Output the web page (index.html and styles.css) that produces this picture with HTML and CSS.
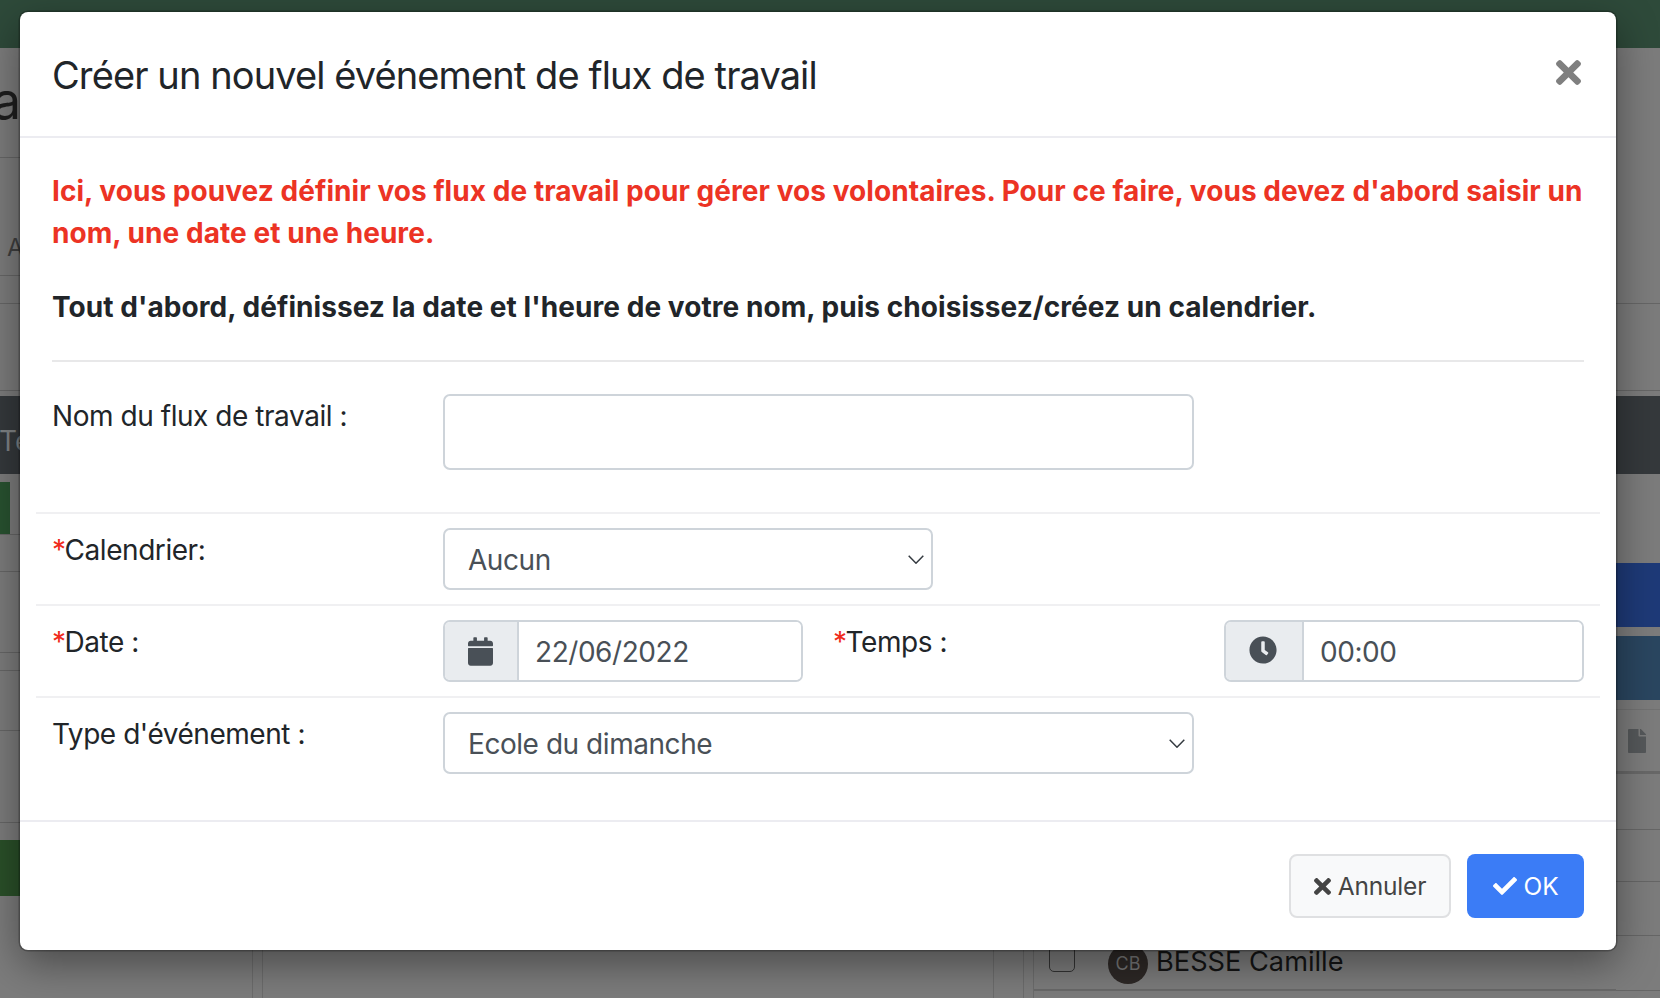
FILE: index.html
```html
<!DOCTYPE html>
<html lang="fr">
<head>
<meta charset="utf-8">
<title>Créer un nouvel événement de flux de travail</title>
<link rel="stylesheet" href="styles.css">
</head>
<body>
<div class="page">
  <div class="topbar"></div>
  <div class="content">
    <div class="strip strip-left">
      <div class="r line heading"><span>al</span></div>
      <div class="r line sublabel"><span>A</span></div>
      <div class="r line"></div>
      <div class="r line"></div>
      <div class="r"></div>
      <div class="r dark"><span>Te</span></div>
      <div class="r"></div>
      <div class="r line"><i class="green-tab"></i></div>
      <div class="r line"></div>
      <div class="r line"></div>
      <div class="r line"></div>
      <div class="r line"></div>
      <div class="r line"></div>
      <div class="r"></div>
      <div class="r green"></div>
      <div class="r"></div>
    </div>
    <div class="middle">
      <div class="panels">
        <div class="col col-a"></div>
        <div class="col col-b"></div>
        <div class="col col-c"></div>
        <div class="col col-d"></div>
        <div class="col col-e"></div>
        <div class="col col-f">
          <div class="person">
            <span class="check"></span>
            <span class="avatar">CB</span>
            <span class="name">BESSE Camille</span>
          </div>
        </div>
      </div>
    </div>
    <div class="strip strip-right">
      <div class="r line"></div>
      <div class="r line"></div>
      <div class="r"></div>
      <div class="r dark"></div>
      <div class="r"></div>
      <div class="r blue"></div>
      <div class="r"></div>
      <div class="r teal"></div>
      <div class="r line-faint"></div>
      <div class="r line-thick file-row">
        <svg class="file-icon" viewBox="0 0 384 512"><path d="M224 136V0H24C10.7 0 0 10.7 0 24v464c0 13.3 10.7 24 24 24h336c13.3 0 24-10.7 24-24V160H248c-13.2 0-24-10.8-24-24zm160-14.1v6.1H256V0h6.1c6.4 0 12.5 2.5 17 7l97.9 98c4.5 4.5 7 10.6 7 16.9z"/></svg>
      </div>
      <div class="r line"></div>
      <div class="r line"></div>
      <div class="r line"></div>
      <div class="r line"></div>
      <div class="r"></div>
    </div>
  </div>

  <div class="modal">
    <header class="modal-header">
      <h5 class="modal-title">Créer un nouvel événement de flux de travail</h5>
      <svg class="close-icon" viewBox="0 80 352 352"><path d="M242.72 256l100.07-100.07c12.28-12.28 12.28-32.19 0-44.48l-22.24-22.24c-12.28-12.28-32.19-12.28-44.48 0L176 189.28 75.93 89.21c-12.28-12.28-32.19-12.28-44.48 0L9.21 111.45c-12.28 12.28-12.28 32.19 0 44.48L109.28 256 9.21 356.07c-12.28 12.28-12.28 32.19 0 44.48l22.24 22.24c12.28 12.28 32.2 12.28 44.48 0L176 322.72l100.07 100.07c12.28 12.28 32.2 12.28 44.48 0l22.24-22.24c12.28-12.28 12.28-32.19 0-44.48L242.72 256z"/></svg>
    </header>
    <div class="modal-body">
      <p class="intro-red">Ici, vous pouvez définir vos flux de travail pour gérer vos volontaires. Pour ce faire, vous devez d'abord saisir un nom, une date et une heure.</p>
      <p class="intro-bold">Tout d'abord, définissez la date et l'heure de votre nom, puis choisissez/créez un calendrier.</p>
      <hr class="divider">
      <div class="form-row first">
        <label class="lbl">Nom du flux de travail :</label>
        <input class="field tall" type="text">
      </div>
      <div class="form-row">
        <label class="lbl"><span class="req">*</span>Calendrier:</label>
        <div class="select-wrap short">
          <select class="field"><option>Aucun</option></select>
          <svg class="chevron" viewBox="0 0 16 9"><path d="M.7.7 8 8.2 15.3.7"/></svg>
        </div>
      </div>
      <div class="form-row">
        <label class="lbl"><span class="req">*</span>Date :</label>
        <div class="group date-group">
          <span class="addon date-addon">
            <svg class="cal-icon" viewBox="0 0 448 512"><path d="M12 192h424c6.6 0 12 5.4 12 12v260c0 26.5-21.5 48-48 48H48c-26.5 0-48-21.5-48-48V204c0-6.6 5.4-12 12-12zm436-44v-36c0-26.5-21.5-48-48-48h-48V12c0-6.6-5.4-12-12-12h-40c-6.6 0-12 5.4-12 12v52H160V12c0-6.6-5.4-12-12-12h-40c-6.6 0-12 5.4-12 12v52H48C21.5 64 0 85.5 0 112v36c0 6.6 5.4 12 12 12h424c6.6 0 12-5.4 12-12z"/></svg>
          </span>
          <input class="group-input" type="text" value="22/06/2022">
        </div>
        <label class="lbl lbl-time"><span class="req">*</span>Temps :</label>
        <div class="group time-group">
          <span class="addon time-addon">
            <svg class="clock-icon" viewBox="0 0 512 512"><path d="M256,8C119,8,8,119,8,256S119,504,256,504,504,393,504,256,393,8,256,8Zm92.49,313h0l-20,25a16,16,0,0,1-22.49,2.5h0l-67-49.72a40,40,0,0,1-15-31.23V112a16,16,0,0,1,16-16h32a16,16,0,0,1,16,16V256l58,42.5A16,16,0,0,1,348.49,321Z"/></svg>
          </span>
          <input class="group-input" type="text" value="00:00">
        </div>
      </div>
      <div class="form-row">
        <label class="lbl">Type d'événement :</label>
        <div class="select-wrap wide">
          <select class="field"><option>Ecole du dimanche</option></select>
          <svg class="chevron" viewBox="0 0 16 9"><path d="M.7.7 8 8.2 15.3.7"/></svg>
        </div>
      </div>
    </div>
    <footer class="modal-footer">
      <button class="btn btn-cancel" type="button">
        <svg class="btn-x" viewBox="0 80 352 352"><path d="M242.72 256l100.07-100.07c12.28-12.28 12.28-32.19 0-44.48l-22.24-22.24c-12.28-12.28-32.19-12.28-44.48 0L176 189.28 75.93 89.21c-12.28-12.28-32.19-12.28-44.48 0L9.21 111.45c-12.28 12.28-12.28 32.19 0 44.48L109.28 256 9.21 356.07c-12.28 12.28-12.28 32.19 0 44.48l22.24 22.24c12.28 12.28 32.2 12.28 44.48 0L176 322.72l100.07 100.07c12.28 12.28 32.2 12.28 44.48 0l22.24-22.24c12.28-12.28 12.28-32.19 0-44.48L242.72 256z"/></svg>
        Annuler
      </button>
      <button class="btn btn-ok" type="button">
        <svg class="btn-check" viewBox="0 64 512 384"><path d="M173.898 439.404l-166.4-166.4c-9.997-9.997-9.997-26.206 0-36.204l36.203-36.204c9.997-9.998 26.207-9.998 36.204 0L192 312.69 432.095 72.596c9.997-9.997 26.207-9.997 36.204 0l36.203 36.204c9.997 9.997 9.997 26.206 0 36.204l-294.4 294.401c-9.998 9.997-26.207 9.997-36.204-.001z"/></svg>
        OK
      </button>
    </footer>
  </div>
</div>
</body>
</html>
```
FILE: styles.css
```css
* { box-sizing: border-box; }
html, body { margin: 0; height: 100%; }
body { font-family: "Inter", "Liberation Sans", sans-serif; background: #7c7c7c; overflow: hidden; }

.page { position: relative; width: 1660px; height: 998px; overflow: hidden; background: #7c7c7c; display: flex; flex-direction: column; }
.topbar { height: 48px; background: #2e4a3a; flex: none; }
.content { flex: 1; display: flex; min-height: 0; }

.strip { flex: none; display: grid; overflow: hidden; }
.strip-left {
  width: 20px;
  grid-template-rows: 110px 118px 28px 87px 5px 78px 8px 53px 37px 81px 18px 60px 92px 17px 56px 1fr;
}
.strip-right {
  width: 44px;
  grid-template-rows: 256px 87px 5px 78px 89px 64px 9px 64px 10px 64px 56px 52px 54px 55px 1fr;
}
.r { min-width: 0; overflow: hidden; white-space: nowrap; }
.line { border-bottom: 1px solid #666; }
.line-faint { border-bottom: 1px solid #727272; }
.line-thick { border-bottom: 3px solid #686868; }
.dark { background: #35393c; color: #7f8385; font-size: 28px; line-height: 90px; }
.dark span { display: block; margin-left: -1px; }
.heading { font-size: 52px; line-height: 1; color: #1e1e1e; padding-top: 27px; }
.heading span { display: block; margin-left: -8px; }
.sublabel { display: flex; align-items: flex-end; color: #3f3f3f; font-size: 24px; line-height: 38px; padding-bottom: 8px; }
.sublabel span { display: block; margin-left: 7px; }
.green-tab { display: block; width: 10px; height: 52px; background: #285230; }
.green { background: #2a5029; }
.blue { background: #1e3a78; }
.teal { background: #2a4660; }
.file-row { display: flex; padding: 19px 0 0 12px; }
.file-icon { width: 18px; height: 24px; fill: #55585a; }

.middle { flex: 1; display: flex; flex-direction: column; justify-content: flex-end; min-width: 0; }
.panels { height: 62px; display: flex; }
.col { border-left: 1px solid #6c6c6c; }
.col-a { width: 232px; border-left: 0; }
.col-b { width: 10px; }
.col-c { width: 731px; }
.col-d { width: 30px; }
.col-e { width: 10px; }
.col-f { flex: 1; border-left: 1px solid #6c6c6c; min-width: 0; }
.person { height: 55px; border-bottom: 2px solid #696969; display: flex; align-items: center; padding-left: 15px; }
.check { width: 26px; height: 26px; border: 1.5px solid #333; border-radius: 5px; margin-top: -8px; flex: none; }
.avatar { width: 40px; height: 40px; border-radius: 50%; background: #2d2826; color: #767676; font-size: 18px; display: flex; align-items: center; justify-content: center; margin-left: 33px; flex: none; margin-top: 2px; }
.name { margin-left: 8px; font-size: 27.2px; color: #141414; margin-top: -2px; }

.modal { position: absolute; left: 20px; top: 12px; width: 1596px; height: 938px; background: #fff; border-radius: 8px; box-shadow: 0 0 0 1.5px rgba(0,0,0,.25), 0 13px 42px rgba(0,0,0,.42); display: flex; flex-direction: column; color: #212529; }
.modal-header { height: 126px; border-bottom: 2px solid #ececf1; padding: 0 35px 0 32px; display: flex; justify-content: space-between; flex: none; }
.modal-title { margin: 0; font-size: 38px; line-height: 44px; padding-top: 41px; font-weight: 400; letter-spacing: -.9px; }
.close-icon { width: 25px; height: 25px; fill: #7f7f7f; margin-top: 48px; flex: none; }

.modal-body { flex: 1; padding: 32px 32px 0; }
.intro-red { margin: 0; font-size: 28px; line-height: 42px; font-weight: 700; color: #ec3324; letter-spacing: .06px; }
.intro-bold { margin: 32px 0 0; font-size: 28px; line-height: 42px; font-weight: 700; letter-spacing: .06px; }
.divider { border: 0; height: 2px; background: #e8e8e9; margin: 32px 0 32px; }

.form-row { display: flex; align-items: flex-start; margin: 0 -16px; padding: 14px 16px; border-top: 2px solid #f0f0f2; }
.form-row.first { border-top: 0; padding: 0 16px 42px; }
.lbl { flex: none; width: 391px; font-size: 28px; line-height: 44px; letter-spacing: -.45px; }
.req { color: #f02a1c; margin-right: -1px; }
.lbl-time { width: 391px; margin-left: 30px; }
.field { display: block; width: 100%; height: 62px; border: 2px solid #ced4da; border-radius: 7px; background: #fff; font: inherit; font-size: 28px; letter-spacing: -.45px; color: #495057; padding: 2px 23px 0; appearance: none; outline: 0; }
.tall { width: 751px; height: 76px; flex: none; }
.select-wrap { position: relative; flex: none; }
.short { width: 490px; }
.wide { width: 751px; }
.chevron { position: absolute; right: 9px; top: 27px; width: 16px; height: 9px; fill: none; stroke: #343a40; stroke-width: 1.5; }

.group { display: flex; height: 62px; border: 2px solid #ced4da; border-radius: 7px; overflow: hidden; flex: none; }
.date-group { width: 360px; }
.time-group { width: 360px; }
.addon { background: #e9ecef; border-right: 2px solid #ced4da; display: flex; align-items: center; justify-content: center; flex: none; }
.date-addon { width: 74px; }
.time-addon { width: 78px; }
.cal-icon { width: 25px; height: 29px; fill: #495057; margin-left: -1px; }
.clock-icon { width: 28px; height: 28px; fill: #495057; margin: -3px 0 0 -2px; }
.group-input { flex: 1; min-width: 0; border: 0; outline: 0; font: inherit; font-size: 28px; letter-spacing: -.45px; color: #495057; padding: 2px 0 0 16px; background: #fff; }

.modal-footer { flex: none; border-top: 2px solid #ececf1; padding: 32px; display: flex; justify-content: flex-end; gap: 16px; }
.btn { height: 64px; border-radius: 8px; font: inherit; font-size: 24.5px; letter-spacing: -.2px; display: flex; align-items: center; padding: 0; justify-content: center; gap: 7px; }
.btn-cancel { width: 162px; background: #f8f9fa; border: 2px solid #dfe0e2; color: #444; }
.btn-ok { width: 117px; background: #3b7cf6; border: 0; color: #fff; }
.btn-x { width: 17px; height: 17px; fill: #444; }
.btn-check { width: 24px; height: 18px; fill: #fff; }
```
